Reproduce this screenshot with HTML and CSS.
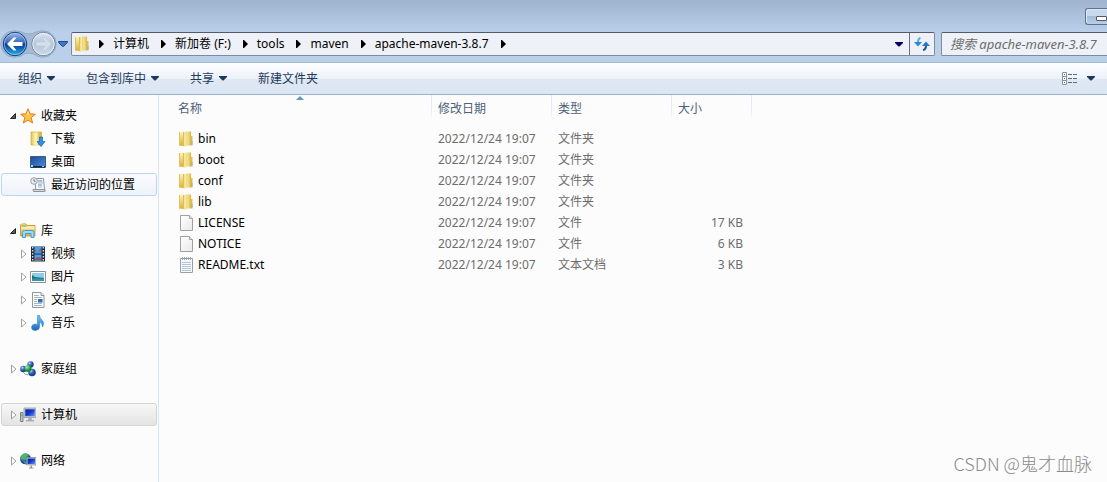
FILE: index.html
```html
<!DOCTYPE html>
<html lang="zh-CN">
<head>
<meta charset="utf-8">
<title>apache-maven-3.8.7</title>
<link rel="stylesheet" href="styles.css">
</head>
<body>
<svg class="defs" aria-hidden="true">
  <defs>
    <linearGradient id="gold" x1="0" x2="1" y1="0" y2="0"><stop offset="0" stop-color="#e3c257"/><stop offset=".3" stop-color="#f8e68f"/><stop offset="1" stop-color="#dbb138"/></linearGradient>
    <linearGradient id="gold2" x1="0" x2="0" y1="0" y2="1"><stop offset="0" stop-color="#fff5b8"/><stop offset="1" stop-color="#d9b032"/></linearGradient>
    <linearGradient id="paper" x1="0" x2="1" y1="0" y2="1"><stop offset="0" stop-color="#fff"/><stop offset="1" stop-color="#e9e9e9"/></linearGradient>
    <linearGradient id="screen" x1="0" x2="1" y1="0" y2="1"><stop offset="0" stop-color="#0a1fa0"/><stop offset=".5" stop-color="#1539cf"/><stop offset="1" stop-color="#6f95ee"/></linearGradient>
    <linearGradient id="desk" x1="0" x2="1" y1="0" y2="1"><stop offset="0" stop-color="#1d4a96"/><stop offset="1" stop-color="#4d8cdb"/></linearGradient>
    <linearGradient id="blue" x1="0" x2="0" y1="0" y2="1"><stop offset="0" stop-color="#7cc5f5"/><stop offset="1" stop-color="#1768bd"/></linearGradient>
    <linearGradient id="ball" x1="0" x2="0" y1="0" y2="1"><stop offset="0" stop-color="#9fb9e6"/><stop offset=".45" stop-color="#3868bc"/><stop offset=".5" stop-color="#07368f"/><stop offset="1" stop-color="#25b8f5"/></linearGradient>
    <linearGradient id="ballOff" x1="0" x2="0" y1="0" y2="1"><stop offset="0" stop-color="#dfe7f1"/><stop offset=".5" stop-color="#b4c4d9"/><stop offset="1" stop-color="#cedcec"/></linearGradient>
    <radialGradient id="orbBlue" cx=".35" cy=".3"><stop offset="0" stop-color="#c8dcf8"/><stop offset=".5" stop-color="#4c7cc4"/><stop offset="1" stop-color="#1e4591"/></radialGradient>
    <radialGradient id="orbGreen" cx=".35" cy=".3"><stop offset="0" stop-color="#b5f0b0"/><stop offset="1" stop-color="#168a38"/></radialGradient>
  </defs>
  <symbol id="folder" viewBox="0 0 16 16">
    <path d="M0 1l5-.5v14.500L0 14.500z" fill="url(#gold2)"/>
    <path d="M0 1h1v13.500H0z" fill="#dfc268"/>
    <path d="M4 1h1.500v14.500L4 15z" fill="#e0bd50"/>
    <path d="M5.500 1l2-.5V15l-2 .8z" fill="#f8e89c"/>
    <path d="M7.500.5h4.500v14H7.500z" fill="url(#gold)"/>
    <path d="M12 5h1.500v9.500H12z" fill="#dcbb57"/>
    <path d="M12.500 10h1v3.500h-1z" fill="#6dbcc0"/>
  </symbol>
  <symbol id="file" viewBox="0 0 16 16">
    <path d="M1.500.5h9l3 3v12h-12z" fill="url(#paper)" stroke="#a0a0a0"/>
    <path d="M10.500.5v3h3" fill="#eee" stroke="#a0a0a0"/>
  </symbol>
  <symbol id="text" viewBox="0 0 16 16">
    <path d="M1.500 1.500h12v14h-12z" fill="#f6f9fc" stroke="#9a9fa5"/>
    <path d="M3 5.500h9M3 7.500h9M3 9.500h9M3 11.500h9M3 13.500h9" stroke="#b7c6d6"/>
    <path d="M3.500 0v3M5.500 0v3M7.500 0v3M9.500 0v3M11.500 0v3" stroke="#8b9095" stroke-width=".7"/>
  </symbol>
  <symbol id="star" viewBox="0 0 16 16">
    <path d="M8 .8l2 5 5.300.4-4.100 3.400 1.400 5.400L8 12.100 3.400 15l1.400-5.400L.7 6.200 6 5.800z" fill="#ffc344" stroke="#e17b1b" stroke-linejoin="round"/>
    <path d="M8 3l1.300 3.600H6.700z" fill="#ffed9c"/>
  </symbol>
  <symbol id="download" viewBox="0 0 16 16">
    <path d="M1 1h10.500v13H1z" fill="url(#gold)" stroke="#c9a542" stroke-width=".6"/>
    <path d="M4.500 2l3-1v14l-3-1z" fill="#fcf0b5"/>
    <path d="M9.500 6h3v4.500H15L11 15.500 7 10.500h2.500z" fill="#2f8fe8" stroke="#1460b8" stroke-width=".7"/>
  </symbol>
  <symbol id="desktop" viewBox="0 0 16 16">
    <path d="M.5 2.500h15v11H.5z" fill="url(#desk)" stroke="#3a5c88"/>
    <path d="M1 12h14v1.500H1z" fill="#15253d"/>
    <path d="M1 11h2v2H1z" fill="#76e6fc"/><path d="M12 12.500h2" stroke="#9bc1ed"/>
  </symbol>
  <symbol id="recent" viewBox="0 0 16 16">
    <path d="M5.500 1.500h8l1 11h-9z" fill="#f7f9fb" stroke="#8d99a6"/>
    <path d="M8 4h4.500M8 8h4" stroke="#5b8fd0"/><path d="M8 6h5M8 10h4" stroke="#a7b6c8"/>
    <path d="M3 12.500h12v2H3.500z" fill="#d7dce1" stroke="#8b939c"/>
    <circle cx="4" cy="4" r="3.300" fill="#e9edf1" stroke="#98a2ac"/>
    <path d="M4 2v2.300h1.700" fill="none" stroke="#5c6670" stroke-width=".8"/>
  </symbol>
  <symbol id="library" viewBox="0 0 16 16">
    <path d="M.5 2l1-1H6l1 1.500h8V13H.5z" fill="url(#gold2)" stroke="#c9a13c"/>
    <path d="M1.500 3h5" stroke="#5da950"/><path d="M1 5h14" stroke="#fff8d1"/>
    <path d="M2.500 14.500v-5q0-2 2-2h7.500q2 0 2 2v5h-3v-4h-5.500v4z" fill="#9bd8fa" stroke="#4a9bd3"/>
  </symbol>
  <symbol id="video" viewBox="0 0 16 16">
    <path d="M1 .5h14v15H1z" fill="#1e2e40"/>
    <path d="M4.500 1h7v6.500h-7zM4.500 8.500h7V15h-7z" fill="#4c9ee5"/>
    <path d="M5 4l3 2 3-4v3.500H5zM5 13l3-2 3 1v2.500H5z" fill="#a05248"/>
    <path d="M2.700 1v14M13.300 1v14" stroke="#eef4f9" stroke-width="1.200" stroke-dasharray="1.500 1.500"/>
  </symbol>
  <symbol id="picture" viewBox="0 0 16 16">
    <path d="M.5 2.500h15v11H.5z" fill="#fff" stroke="#8a9298"/>
    <path d="M2 4h12v8H2z" fill="#8acdf3"/>
    <path d="M2 6l3 2 9 1v1H2z" fill="#2b7353"/><path d="M2 9.500h12V12H2z" fill="#3192bd"/>
  </symbol>
  <symbol id="document" viewBox="0 0 16 16">
    <path d="M2.500.5h8.500l3 3v12H2.500z" fill="#fbfcfd" stroke="#8f979e"/>
    <path d="M11 .5v3h3" fill="#e2e6ea" stroke="#8f979e"/>
    <path d="M4 3.500h5M4 5.500h8M4 7.500h3M4 9.500h3M4 11.500h8M4 13.500h8" stroke="#a9b7c5"/>
    <path d="M8 7h4.500v3.500H8z" fill="#2671ba"/>
  </symbol>
  <symbol id="music" viewBox="0 0 16 16">
    <path d="M7.500.5h2q0 2.500 2.500 4.500 3 3 .5 7 0-4-3-5v5q0 3-4 3.500-4 0-4-3t3.500-3.500q1.500 0 2.500.5z" fill="url(#blue)" stroke="#2784ca" stroke-width=".6"/>
  </symbol>
  <symbol id="homegroup" viewBox="0 0 16 16">
    <circle cx="10.500" cy="3.500" r="3.200" fill="url(#orbBlue)"/>
    <circle cx="3.300" cy="8" r="3.200" fill="url(#orbBlue)"/>
    <circle cx="12" cy="11.500" r="3.800" fill="url(#orbBlue)"/>
    <circle cx="8" cy="7.500" r="3.600" fill="url(#orbGreen)"/>
    <path d="M3 11q2 3 5 3" fill="none" stroke="#80a4d6"/>
  </symbol>
  <symbol id="computer" viewBox="0 0 16 16">
    <path d="M.5 5.500h2.500v9H.5z" fill="#bfc4c8" stroke="#7c8388"/><path d="M1 8h1.500" stroke="#35b84a"/>
    <path d="M4 1h12v9.500H4z" fill="#c3cbd3" stroke="#8b949c" stroke-width=".7"/>
    <path d="M5.300 2.300h9.400v6.900H5.300z" fill="url(#screen)"/>
    <path d="M8.500 11h3l.5 2h2v1.500H6V13h2z" fill="#a5adb4"/>
  </symbol>
  <symbol id="network" viewBox="0 0 16 16">
    <circle cx="5.500" cy="5.800" r="5.500" fill="url(#orbBlue)"/>
    <path d="M2 2q4-3 7 0L6 4 5 7 1 6zM3 8l3 1-.5 2.300z" fill="#46bd54"/>
    <path d="M6.500 4.500h9.500v7.500H6.500z" fill="#c9d1d9" stroke="#76828e" stroke-width=".6"/>
    <path d="M7.500 5.500h7.500v5.500H7.500z" fill="url(#screen)"/>
    <path d="M10.500 12.500h1.500v2h1.500v1H9v-1h1.500z" fill="#8d979f"/>
  </symbol>
  <symbol id="closed" viewBox="0 0 8 10"><path d="M1.500 1l4.500 4-4.500 4z" fill="#fff" stroke="#a0a0a0"/></symbol>
  <symbol id="open" viewBox="0 0 8 10"><path d="M5.500 2.500v5h-5z" fill="#595959" stroke="#262626"/></symbol>
  <symbol id="right" viewBox="0 0 5 8"><path d="M0 0h1l4 4-4 4H0z"/></symbol>
  <symbol id="down" viewBox="0 0 8 5"><path d="M0 0h8v1L4.500 4.500h-1L0 1z"/></symbol>
</svg>

<div class="window">
  <header class="frame">
    <div class="titlebar">
      <button class="minimize" aria-label="最小化"><span></span></button>
    </div>
    <div class="navbar">
      <div class="travel">
        <svg class="travel-art" viewBox="0 0 58 28" aria-hidden="true">
          <path d="M14 .8q7 0 11 2.500 4 1 8 0Q37 .8 43 .8a13.200 13.200 0 0 1 0 26.400q-6 0-10-3.500-4-1-8 0-4 3.500-11 3.500A13.200 13.200 0 0 1 14 .8z" fill="#a4b9d3" stroke="#95abc8"/>
          <circle cx="15" cy="14" r="11.700" fill="url(#ball)" stroke="#143c7d"/>
          <circle cx="15" cy="14" r="10.700" fill="none" stroke="#a6cbee" stroke-opacity=".7"/>
          <path d="M7 14l6.500-6.500h3L13 12h9.500v4H13l3.500 4.500h-3z" fill="#fff"/>
          <circle cx="43.500" cy="14" r="11.700" fill="url(#ballOff)" stroke="#74879f"/>
          <circle cx="43.500" cy="14" r="10.700" fill="none" stroke="#e6eef7"/>
          <path d="M51.500 14L45 7.500h-3l3.500 4.500H36v4h9.500L42 20.500h3z" fill="#d5dfeb" stroke="#bccbdc" stroke-width=".6"/>
        </svg>
        <button class="recent-pages" aria-label="最近的页面"><svg viewBox="0 0 10 6"><path d="M.5.5h9v1L5.500 5.500h-1L.5 1.500z" fill="#3f78c7" stroke="#234a84"/></svg></button>
      </div>
      <nav class="address" aria-label="地址">
        <svg class="icon"><use href="#folder"/></svg>
        <svg class="right"><use href="#right"/></svg>
        <a href="#">计算机</a>
        <svg class="right"><use href="#right"/></svg>
        <a href="#">新加卷 (F:)</a>
        <svg class="right"><use href="#right"/></svg>
        <a href="#">tools</a>
        <svg class="right"><use href="#right"/></svg>
        <a href="#">maven</a>
        <svg class="right"><use href="#right"/></svg>
        <a href="#">apache-maven-3.8.7</a>
        <svg class="right"><use href="#right"/></svg>
        <button class="history" aria-label="以前的位置"><svg class="down"><use href="#down"/></svg></button>
        <button class="refresh" aria-label="刷新">
          <svg viewBox="0 0 16 14"><path d="M6.500 1Q4 1.500 4 5.500" fill="none" stroke="#4fb4ea" stroke-width="2"/><path d="M0 5h8L4 9.500z" fill="#2b86d6"/><path d="M9 13q3-.5 3-4.500" fill="none" stroke="#1b4f9c" stroke-width="2"/><path d="M8 9h8L12 4.500z" fill="#2b74c9"/></svg>
        </button>
      </nav>
      <input class="search" type="text" aria-label="搜索" placeholder="搜索 apache-maven-3.8.7">
    </div>
  </header>

  <div class="toolbar">
    <button>组织<svg class="down"><use href="#down"/></svg></button>
    <button>包含到库中<svg class="down"><use href="#down"/></svg></button>
    <button>共享<svg class="down"><use href="#down"/></svg></button>
    <button>新建文件夹</button>
    <button class="view" aria-label="更改您的视图">
      <svg class="view-icon" viewBox="0 0 16 13"><path d="M.5.5h4v12h-4z" fill="#fff" stroke="#8494a5"/><path d="M.5 4.500h4M.5 8.500h4" stroke="#8494a5"/><path d="M2 2.500h1M2 10.500h1" stroke="#3f8455"/><path d="M2 6.500h1" stroke="#a44737"/><path d="M6 2.500h4M11 2.500h4M6 6.500h4M11 6.500h4M6 10.500h4M11 10.500h4" stroke="#566c85"/></svg>
      <svg class="down"><use href="#down"/></svg>
    </button>
  </div>

  <div class="body">
    <nav class="sidebar" aria-label="导航窗格">
      <ul>
        <li><button class="twist" aria-label="折叠"><svg><use href="#open"/></svg></button><a href="#"><svg class="icon"><use href="#star"/></svg>收藏夹</a></li>
        <li class="child"><span class="twist"></span><a href="#"><svg class="icon"><use href="#download"/></svg>下载</a></li>
        <li class="child"><span class="twist"></span><a href="#"><svg class="icon"><use href="#desktop"/></svg>桌面</a></li>
        <li class="child hover"><span class="twist"></span><a href="#"><svg class="icon"><use href="#recent"/></svg>最近访问的位置</a></li>
      </ul>
      <ul>
        <li><button class="twist" aria-label="折叠"><svg><use href="#open"/></svg></button><a href="#"><svg class="icon"><use href="#library"/></svg>库</a></li>
        <li class="child"><button class="twist" aria-label="展开"><svg><use href="#closed"/></svg></button><a href="#"><svg class="icon"><use href="#video"/></svg>视频</a></li>
        <li class="child"><button class="twist" aria-label="展开"><svg><use href="#closed"/></svg></button><a href="#"><svg class="icon"><use href="#picture"/></svg>图片</a></li>
        <li class="child"><button class="twist" aria-label="展开"><svg><use href="#closed"/></svg></button><a href="#"><svg class="icon"><use href="#document"/></svg>文档</a></li>
        <li class="child"><button class="twist" aria-label="展开"><svg><use href="#closed"/></svg></button><a href="#"><svg class="icon"><use href="#music"/></svg>音乐</a></li>
      </ul>
      <ul>
        <li><button class="twist" aria-label="展开"><svg><use href="#closed"/></svg></button><a href="#"><svg class="icon"><use href="#homegroup"/></svg>家庭组</a></li>
      </ul>
      <ul>
        <li class="selected"><button class="twist" aria-label="展开"><svg><use href="#closed"/></svg></button><a href="#"><svg class="icon"><use href="#computer"/></svg>计算机</a></li>
      </ul>
      <ul>
        <li><button class="twist" aria-label="展开"><svg><use href="#closed"/></svg></button><a href="#"><svg class="icon"><use href="#network"/></svg>网络</a></li>
      </ul>
    </nav>

    <main class="files">
      <table>
        <colgroup><col class="c-name"><col class="c-date"><col class="c-type"><col class="c-size"><col></colgroup>
        <thead>
          <tr><th class="sorted">名称<svg class="sort" viewBox="0 0 8 4"><path d="M0 4l4-4 4 4z" fill="#5a9cc6"/></svg></th><th>修改日期</th><th>类型</th><th>大小</th><td></td></tr>
        </thead>
        <tbody>
          <tr><td><span class="name"><svg class="icon"><use href="#folder"/></svg>bin</span></td><td>2022/12/24 19:07</td><td>文件夹</td><td></td><td></td></tr>
          <tr><td><span class="name"><svg class="icon"><use href="#folder"/></svg>boot</span></td><td>2022/12/24 19:07</td><td>文件夹</td><td></td><td></td></tr>
          <tr><td><span class="name"><svg class="icon"><use href="#folder"/></svg>conf</span></td><td>2022/12/24 19:07</td><td>文件夹</td><td></td><td></td></tr>
          <tr><td><span class="name"><svg class="icon"><use href="#folder"/></svg>lib</span></td><td>2022/12/24 19:07</td><td>文件夹</td><td></td><td></td></tr>
          <tr><td><span class="name"><svg class="icon"><use href="#file"/></svg>LICENSE</span></td><td>2022/12/24 19:07</td><td>文件</td><td class="size">17 KB</td><td></td></tr>
          <tr><td><span class="name"><svg class="icon"><use href="#file"/></svg>NOTICE</span></td><td>2022/12/24 19:07</td><td>文件</td><td class="size">6 KB</td><td></td></tr>
          <tr><td><span class="name"><svg class="icon"><use href="#text"/></svg>README.txt</span></td><td>2022/12/24 19:07</td><td>文本文档</td><td class="size">3 KB</td><td></td></tr>
        </tbody>
      </table>
      <div class="watermark">CSDN @鬼才血脉</div>
    </main>
  </div>
</div>
</body>
</html>
```
FILE: styles.css
```css
* {
  box-sizing: border-box;
}

body {
  margin: 0;
  background: #fcfcfc;
  color: #000;
  font: 12px/16px "Noto Sans", "Noto Sans CJK SC", sans-serif;
}

button {
  margin: 0;
  padding: 0;
  border: 0;
  background: none;
  color: inherit;
  font: inherit;
}

a {
  color: inherit;
  text-decoration: none;
}

svg {
  display: block;
  flex: none;
}

.defs {
  position: absolute;
  width: 0;
  height: 0;
}

.icon {
  width: 16px;
  height: 16px;
}

.right {
  width: 5px;
  height: 8px;
}

.down {
  width: 8px;
  height: 5px;
  fill: currentColor;
}

.window {
  display: flex;
  flex-direction: column;
  min-height: 100vh;
  overflow: hidden;
}

/* Glass frame */

.frame {
  background: linear-gradient(#9fb3ce, #b9cfea 32px, #b9cfea);
}

.titlebar {
  display: flex;
  justify-content: flex-end;
  height: 30px;
  padding-top: 8px;
}

.minimize {
  display: flex;
  align-items: center;
  justify-content: flex-end;
  width: 22px;
  height: 17px;
  border: 1px solid #5d7390;
  border-right: 0;
  border-radius: 3px 0 0 3px;
  background: linear-gradient(#c9d8ea 50%, #a5bbd6 50%, #b9cfe8);
  box-shadow: inset 1px 1px #dde8f4;
}

.minimize span {
  width: 11px;
  height: 5px;
  margin-top: 3px;
  border: 1px solid #535b66;
  border-radius: 1px;
  background: #fff;
}

.navbar {
  display: flex;
  align-items: center;
  height: 32px;
  padding-bottom: 4px;
}

.travel {
  display: flex;
  align-items: center;
  width: 71px;
}

.travel-art {
  width: 58px;
  height: 28px;
}

.recent-pages svg {
  width: 10px;
  height: 6px;
}

.address {
  display: flex;
  flex: 1;
  align-items: center;
  height: 24px;
  padding-left: 3px;
  border: 1px solid #808a98;
  border-top-color: #555b66;
  border-radius: 2px;
  background: #eef1f7;
}

.address .right {
  margin: 0 9px 0 8px;
}

.address a + .right {
  margin-left: 12px;
}

.address .history {
  margin-left: auto;
  padding: 8px 6px;
  color: #000060;
}

.refresh {
  display: grid;
  place-items: center;
  width: 25px;
  height: 22px;
  border-left: 1px solid #6a6f79;
}

.refresh svg {
  width: 16px;
  height: 14px;
}

.search {
  width: 15%;
  height: 24px;
  margin-left: 6px;
  padding: 0 8px;
  border: 1px solid #808a98;
  border-top-color: #555b66;
  border-right: 0;
  border-radius: 2px 0 0 2px;
  background: #eef1f7;
  font: italic 13px/16px "Noto Sans", "Noto Sans CJK SC", sans-serif;
}

.search::placeholder {
  color: #6d6d6d;
}

/* Command bar */

.toolbar {
  display: flex;
  align-items: center;
  gap: 31px;
  height: 33px;
  padding: 0 12px 0 18px;
  border-top: 1px solid #a3bbd8;
  border-bottom: 1px solid #9db1cb;
  background: linear-gradient(#fdfeff, #ecf2fa 50%, #dfe7f1 50%, #dbe7f6);
  color: #1e395b;
}

.toolbar button {
  display: flex;
  align-items: center;
  gap: 5px;
}

.toolbar .view {
  gap: 9px;
  margin-left: auto;
}

.view-icon {
  width: 16px;
  height: 13px;
}

/* Navigation pane */

.body {
  display: flex;
  flex: 1;
}

.sidebar {
  display: flex;
  flex: none;
  flex-direction: column;
  gap: 23px;
  width: 159px;
  padding: 9px 1px;
  border-right: 1px solid #d5e5f5;
}

.sidebar ul {
  margin: 0;
  padding: 0;
  list-style: none;
}

.sidebar li {
  display: flex;
  align-items: center;
  height: 23px;
  padding-left: 8px;
  border: 1px solid transparent;
  border-radius: 3px;
}

.sidebar .child {
  padding-left: 18px;
}

.sidebar .hover {
  border-color: #b8d6f3;
  background: linear-gradient(#fafbfd, #eef3fa);
}

.sidebar .selected {
  border-color: #d4d4d4;
  background: linear-gradient(#f7f7f7, #e4e4e4);
}

.sidebar a {
  display: flex;
  align-items: center;
  gap: 5px;
}

.twist {
  width: 10px;
}

.twist svg {
  width: 8px;
  height: 10px;
}

/* File list */

.files {
  flex: 1;
  position: relative;
}

table {
  width: 100%;
  border-collapse: collapse;
  table-layout: fixed;
}

.c-name {
  width: 273px;
}

.c-date,
.c-type {
  width: 120px;
}

.c-size {
  width: 80px;
}

th {
  height: 33px;
  padding: 6px 6px 0;
  background: linear-gradient(#dfeaf5, #e6eef7 70%, #fcfcfc) right top / 1px 23px no-repeat;
  color: #4c607a;
  font-weight: 400;
  text-align: left;
  vertical-align: top;
}

.sorted {
  position: relative;
  padding-left: 19px;
}

.sort {
  position: absolute;
  top: 1px;
  left: 50%;
  width: 8px;
  height: 4px;
}

tbody td {
  height: 21px;
  padding: 0 6px;
  color: #6d6d6d;
}

tbody td:first-child {
  padding-left: 20px;
  color: #000;
}

.name {
  display: flex;
  align-items: center;
  gap: 3px;
}

tbody .size {
  padding-right: 9px;
  text-align: right;
}

.watermark {
  position: absolute;
  right: 15px;
  bottom: 7px;
  color: #8c8c8c;
  font: 300 18px/24px "Noto Sans CJK SC", sans-serif;
}
```
